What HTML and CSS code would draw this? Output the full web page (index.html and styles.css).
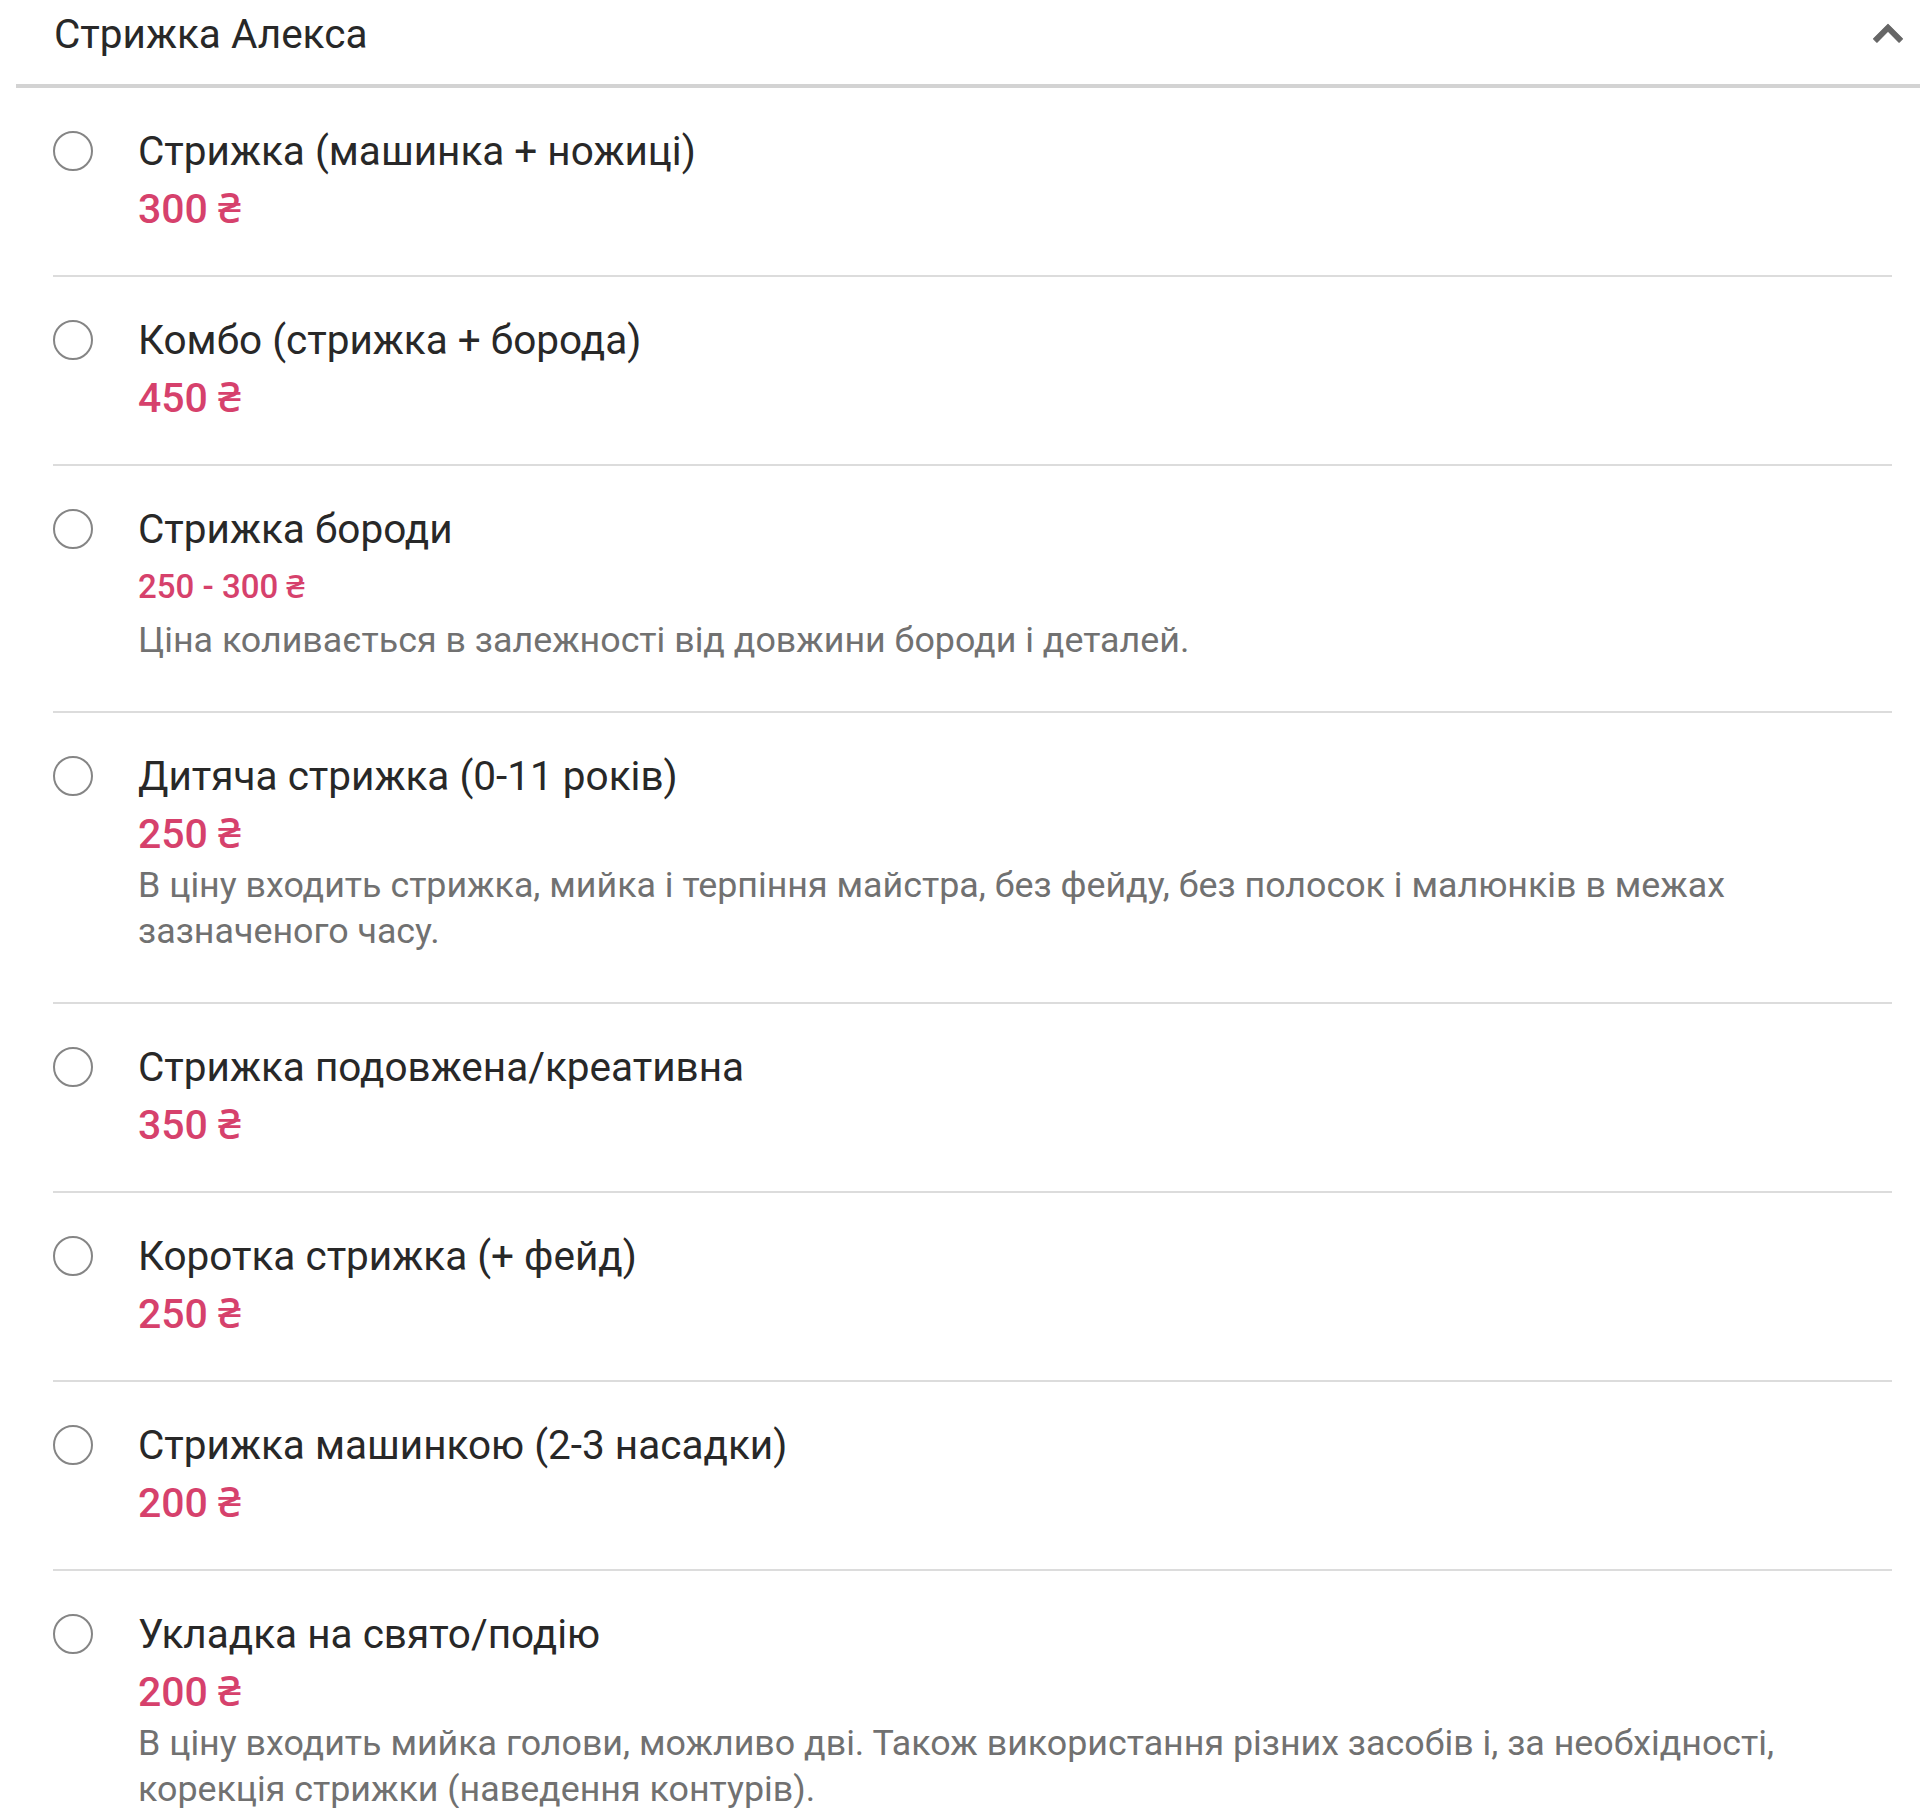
FILE: index.html
```html
<!DOCTYPE html>
<html lang="uk">
<head>
<meta charset="utf-8">
<title>Стрижка Алекса</title>
<link rel="stylesheet" href="styles.css">
</head>
<body>
<section class="group">
  <header class="group-head">
    <span class="group-title">Стрижка Алекса</span>
    <svg class="chevron" viewBox="0 0 24 24" width="58" height="58" aria-hidden="true"><path d="M12 8l-6 6 1.41 1.41L12 10.83l4.59 4.58L18 14z"/></svg>
  </header>
  <ul class="services">
    <li class="service">
      <span class="radio"></span>
      <div class="info">
        <div class="name">Стрижка (машинка + ножиці)</div>
        <div class="price">300 ₴</div>
      </div>
    </li>
    <li class="service">
      <span class="radio"></span>
      <div class="info">
        <div class="name">Комбо (стрижка + борода)</div>
        <div class="price">450 ₴</div>
      </div>
    </li>
    <li class="service">
      <span class="radio"></span>
      <div class="info">
        <div class="name">Стрижка бороди</div>
        <div class="price price-range">250 - 300 ₴</div>
        <div class="desc">Ціна коливається в залежності від довжини бороди і деталей.</div>
      </div>
    </li>
    <li class="service">
      <span class="radio"></span>
      <div class="info">
        <div class="name">Дитяча стрижка (0-11 років)</div>
        <div class="price">250 ₴</div>
        <div class="desc">В ціну входить стрижка, мийка і терпіння майстра, без фейду, без полосок і малюнків в межах зазначеного часу.</div>
      </div>
    </li>
    <li class="service">
      <span class="radio"></span>
      <div class="info">
        <div class="name">Стрижка подовжена/креативна</div>
        <div class="price">350 ₴</div>
      </div>
    </li>
    <li class="service">
      <span class="radio"></span>
      <div class="info">
        <div class="name">Коротка стрижка (+ фейд)</div>
        <div class="price">250 ₴</div>
      </div>
    </li>
    <li class="service">
      <span class="radio"></span>
      <div class="info">
        <div class="name">Стрижка машинкою (2-3 насадки)</div>
        <div class="price">200 ₴</div>
      </div>
    </li>
    <li class="service">
      <span class="radio"></span>
      <div class="info">
        <div class="name">Укладка на свято/подію</div>
        <div class="price">200 ₴</div>
        <div class="desc">В ціну входить мийка голови, можливо дві. Також використання різних засобів і, за необхідності, корекція стрижки (наведення контурів).</div>
      </div>
    </li>
  </ul>
</section>
</body>
</html>
```

FILE: styles.css
```css
html, body {
  margin: 0;
  padding: 0;
  background: #ffffff;
}

body {
  font-family: Roboto, "Noto Sans", "Liberation Sans", sans-serif;
  color: #222222;
  overflow: hidden;
}

.group {
  width: 1920px;
}

.group-head {
  margin-left: 16px;
  height: 84px;
  box-sizing: content-box;
  border-bottom: 4px solid #d3d3d3;
  display: flex;
  align-items: flex-start;
  justify-content: space-between;
  padding: 0 3px 0 38px;
}

.group-title {
  font-size: 40.5px;
  line-height: 56px;
  padding-top: 6px;
  color: #282828;
}

.chevron {
  fill: #666666;
  stroke: #666666;
  stroke-width: 0.45;
  stroke-linejoin: round;
  margin-top: 5px;
}

.services {
  list-style: none;
  margin: 0 28px 0 53px;
  padding: 0;
}

.service {
  display: flex;
  gap: 45px;
  padding: 35px 0 38px;
  border-bottom: 2px solid #dcdcdc;
}

.radio {
  flex: none;
  width: 36px;
  height: 36px;
  border: 2px solid #858585;
  border-radius: 50%;
  margin-top: 8px;
}

.info {
  flex: 1;
  min-width: 0;
}

.name {
  font-size: 40.5px;
  line-height: 56px;
  color: #282828;
}

.price {
  font-size: 41px;
  line-height: 55px;
  padding-top: 3px;
  font-weight: 500;
  color: #d6416c;
}

.price-range {
  font-size: 33px;
  line-height: 60px;
  padding-top: 0;
}

.desc {
  font-size: 35.8px;
  line-height: 46px;
  color: #717171;
  padding-bottom: 10px;
}
```
